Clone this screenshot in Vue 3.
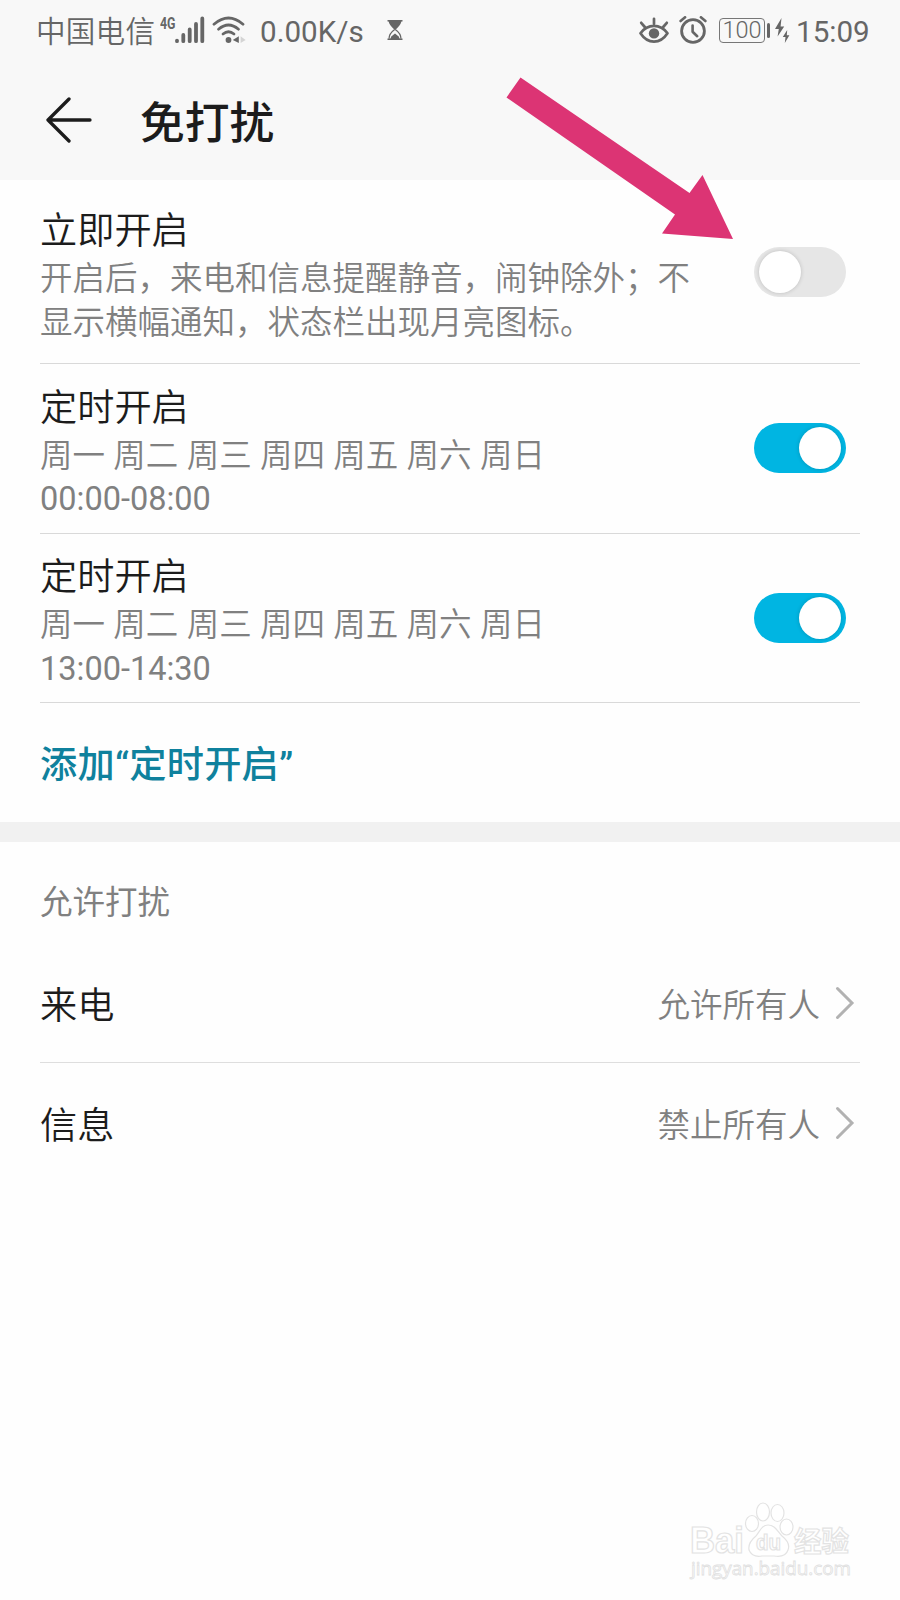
<template>
	<div class="page">
		<header class="header">
			<div class="status-bar">
				<span class="carrier">中国电信</span>
				<svg class="icon-signal" width="45" height="36" viewBox="0 -4 45 36">
					<text x="0" y="12.8" class="network" textLength="15.5" lengthAdjust="spacingAndGlyphs">4G</text>
					<g stroke="#666" stroke-width="3.8" stroke-linecap="round">
						<path d="M17 24.6v.6M23.3 19v6.2M29.7 13.5v11.7M36 8v17.2M42.3 2.4v22.8" />
					</g>
				</svg>
				<svg class="icon-wifi" width="34" height="28" viewBox="0 0 34 28">
					<g fill="none" stroke="#666" stroke-width="2.8" stroke-linecap="round">
						<path d="M2 8.2Q16.5-4.2 31 8.2" />
						<path d="M6.5 13.2Q16.5 4.8 26.5 13.2" />
						<path d="M11 18Q16.5 13.6 22 18" />
					</g>
					<circle cx="16.5" cy="24" r="2.9" fill="#666" />
					<path d="M26.8 20.3v6.8l-6-3.2z" fill="#666" />
					<path d="M28.6 20.3v6.8l5-3.2z" fill="#d4d4d4" />
				</svg>
				<span class="speed">0.00K/s</span>
				<svg class="icon-hourglass" width="16" height="20" viewBox="0 0 16 20">
					<path d="M.5.7h15M.5 19.3h15" stroke="#666" stroke-width="1.4" />
					<path d="M1.5 1h13q-.6 4-6 8.7h-1Q2.1 5 1.5 1z" fill="#666" />
					<path d="M7.7 9.5Q2 13.5 2 18.8M8.3 9.5Q14 13.5 14 18.8" fill="none" stroke="#666" stroke-width="1.2" />
					<path d="M3.3 19l1-2.6L8 13.5l3.7 2.9 1 2.6z" fill="#666" />
				</svg>
				<span class="spacer"></span>
				<svg class="icon-eye" width="30" height="27" viewBox="0 0 30 27">
					<g fill="none" stroke="#666" stroke-width="2.7" stroke-linecap="round">
						<path d="M1.5 16.2Q7 8.900 15 8.900T28.5 16.2Q23 24.6 15 24.6T1.5 16.2z" stroke-linejoin="round" />
						<path d="M15 1.8v5M2.2 5.8l3.6 4.2M27.8 5.8l-3.6 4.2" />
					</g>
					<circle cx="15" cy="16.4" r="5.2" fill="#666" />
				</svg>
				<svg class="icon-alarm" width="28" height="28" viewBox="0 0 28 28">
					<g fill="none" stroke="#666" stroke-linecap="round">
						<circle cx="14" cy="15" r="11.4" stroke-width="2.8" />
						<path d="M13.6 9.5v6.2l4.6 4.5" stroke-width="2.6" stroke-linejoin="round" />
						<path d="M1.6 5l4.5-3.7M26.4 5l-4.5-3.7" stroke-width="2.6" />
					</g>
				</svg>
				<div class="battery">100</div>
				<span class="battery-tip"></span>
				<svg class="icon-bolt" width="15" height="26" viewBox="0 0 15 26">
					<path d="M6.5 1L0 12h3.8L2.6 19.5 9.2 9.5H5.6z" fill="#666" />
					<path d="M12.2 13L7.8 20h2.7l-.7 6 4.6-7.7h-2.6z" fill="#666" />
				</svg>
				<span class="clock">15:09</span>
			</div>
			<div class="title-bar">
				<svg class="back" width="46" height="46" viewBox="0 0 46 46">
					<path d="M23 2L2 23l21 21M2 23h42" fill="none" stroke="#1c1c1c" stroke-width="3.3" stroke-linecap="round" stroke-linejoin="round" />
				</svg>
				<h1>免打扰</h1>
			</div>
		</header>

		<section class="schedules">
			<div v-for="(item, index) in items" :key="index" class="row">
				<div class="row-text">
					<div class="row-title">{{ item.title }}</div>
					<div v-for="line in item.lines" :key="line" class="row-desc">{{ line }}</div>
					<div v-if="item.time" class="row-desc time">{{ item.time }}</div>
				</div>
				<button
					type="button"
					class="switch"
					:class="{ on: item.enabled }"
					@click="item.enabled = !item.enabled"
				>
					<span class="knob"></span>
				</button>
			</div>
			<div class="add">添加“定时开启”</div>
		</section>

		<div class="divider"></div>

		<section class="allow">
			<div class="allow-title">允许打扰</div>
			<div v-for="rule in rules" :key="rule.name" class="rule">
				<span class="rule-name">{{ rule.name }}</span>
				<span class="rule-value">{{ rule.value }}</span>
				<svg class="chevron" width="20" height="34" viewBox="0 0 20 34">
					<path d="M2.5 2.5L17 17 2.5 31.5" fill="none" stroke="#b2b2b2" stroke-width="3" stroke-linecap="round" />
				</svg>
			</div>
		</section>

		<svg class="pointer" width="228" height="163" viewBox="0 0 228 163">
			<path d="M13.5.5L182.500 116 195.500 98 226 162l-71-5.500 13-19L-.5 20.500z" fill="#dc3474" />
		</svg>

		<svg class="watermark" width="170" height="82" viewBox="0 0 170 82">
			<g fill="#fff" stroke="#e3e3e3" stroke-width="1.2">
				<text x="2" y="53" class="wm-bold" font-size="36" textLength="54" lengthAdjust="spacingAndGlyphs">Bai</text>
				<ellipse cx="64" cy="23.5" rx="6.5" ry="8" />
				<ellipse cx="75" cy="12" rx="6.5" ry="9" />
				<ellipse cx="89.5" cy="13" rx="6.5" ry="8.5" />
				<ellipse cx="98.500" cy="27" rx="6.5" ry="8" />
				<path d="M80 25c7 0 9 6 14 11 5 4 8 9 6 14-2 6-8 7-14 6h-12c-6 1-11-1-13-6-1-6 2-10 7-14 4-5 6-11 12-11z" />
				<text x="68" y="50" class="wm-bold" font-size="22" textLength="25" lengthAdjust="spacingAndGlyphs">du</text>
				<text x="106" y="52" class="wm-bold" font-size="28" textLength="55" lengthAdjust="spacingAndGlyphs">经验</text>
			</g>
			<text x="3" y="75" class="wm-url" textLength="160" lengthAdjust="spacingAndGlyphs">jingyan.baidu.com</text>
		</svg>
	</div>
</template>

<script setup>
import { ref } from "vue";

const items = ref([
	{
		title: "立即开启",
		lines: ["开启后，来电和信息提醒静音，闹钟除外；不", "显示横幅通知，状态栏出现月亮图标。"],
		enabled: false,
	},
	{
		title: "定时开启",
		lines: ["周一 周二 周三 周四 周五 周六 周日"],
		time: "00:00-08:00",
		enabled: true,
	},
	{
		title: "定时开启",
		lines: ["周一 周二 周三 周四 周五 周六 周日"],
		time: "13:00-14:30",
		enabled: true,
	},
]);

const rules = ref([
	{ name: "来电", value: "允许所有人" },
	{ name: "信息", value: "禁止所有人" },
]);
</script>

<style>
body {
	margin: 0;
	background-color: #fefefe;
}
</style>

<style scoped>
.page {
	position: relative;
	width: 900px;
	height: 1600px;
	overflow: hidden;
	background-color: #fefefe;
	color: #1c1c1c;
	font-family: Roboto, "Noto Sans CJK SC", sans-serif;
}

.header {
	height: 180px;
	background-color: #f8f8f8;
}

.status-bar {
	display: flex;
	align-items: center;
	height: 60px;
	padding: 0 30px 0 36px;
	color: #666;
	font-size: 29.6px;
	line-height: 56px;
	white-space: nowrap;
}

.carrier {
	width: 124px;
	padding-top: 4px;
	font-weight: 350;
	letter-spacing: 0.2px;
}

.network {
	fill: #666;
	font-size: 17px;
	font-weight: 700;
}

.icon-wifi {
	margin-left: 7px;
}

.speed {
	width: 127px;
	padding-top: 4px;
	margin-left: 14px;
}

.spacer {
	flex: 1;
}

.icon-alarm {
	margin-left: 10px;
}

.battery {
	box-sizing: border-box;
	width: 46px;
	height: 25px;
	margin-left: 12px;
	border: 1.5px solid #777;
	border-radius: 4px;
	font-size: 23.5px;
	font-weight: 300;
	line-height: 23px;
	text-align: center;
}

.battery-tip {
	width: 3.5px;
	height: 15px;
	margin-left: 1.5px;
	border-radius: 2px;
	background-color: #666;
}

.icon-bolt {
	margin-left: 5px;
}

.clock {
	width: 74px;
	padding-top: 4px;
	margin-left: 6px;
}

.title-bar {
	display: flex;
	align-items: center;
	height: 120px;
	padding-left: 46px;
}

h1 {
	padding-top: 8px;
	margin: 0 0 0 48px;
	font-size: 44.8px;
	font-weight: 500;
	line-height: 60px;
}

.schedules {
	height: 642px;
	padding: 0 40px;
}

.row {
	display: flex;
	box-sizing: border-box;
	align-items: center;
	justify-content: space-between;
	height: 169.5px;
	padding-right: 14px;
	border-bottom: 1px solid #d9d9d9;
}

.row:first-child {
	height: 184px;
}

.row-text {
	padding-top: 6px;
}

.row-title {
	font-size: 37.2px;
	font-weight: 350;
	line-height: 54px;
}

.row-desc {
	color: #808080;
	font-size: 32.5px;
	font-weight: 350;
	line-height: 43.5px;
	word-spacing: 0.4px;
	white-space: nowrap;
}

.time {
	font-weight: 400;
}

.switch {
	width: 92px;
	height: 50px;
	padding: 4px 5px;
	border: none;
	border-radius: 25px;
	background-color: #e6e6e6;
	cursor: pointer;
}

.knob {
	display: block;
	width: 42px;
	height: 42px;
	border-radius: 50%;
	background-color: #fff;
	box-shadow: 0 0 4px rgba(0, 0, 0, 0.18);
}

.switch.on {
	background-color: #00b5e2;
}

.switch.on .knob {
	margin-left: 40px;
}

.add {
	padding-top: 3px;
	color: #0f819d;
	font-size: 37.2px;
	font-weight: 500;
	letter-spacing: 0.25px;
	line-height: 119px;
}

.divider {
	height: 20px;
	background-color: #f1f1f1;
}

.allow {
	padding: 0 40px;
}

.allow-title {
	height: 101px;
	color: #808080;
	font-size: 32.5px;
	line-height: 123px;
}

.rule {
	display: flex;
	align-items: center;
	height: 119px;
	padding-right: 5px;
	border-bottom: 1px solid #dedede;
}

.rule:last-child {
	border-bottom: none;
}

.rule-name {
	flex: 1;
	font-size: 37.2px;
	font-weight: 350;
}

.rule-value {
	color: #808080;
	font-size: 32.5px;
	font-weight: 350;
}

.chevron {
	margin-left: 15px;
}

.pointer {
	position: absolute;
	top: 77px;
	left: 507px;
	overflow: visible;
}

.watermark {
	position: absolute;
	top: 1500px;
	left: 688px;
}

.wm-bold {
	font-family: "Liberation Sans", "Noto Sans CJK SC", sans-serif;
	font-weight: 700;
}

.wm-url {
	fill: #fff;
	stroke: #e0e0e0;
	stroke-width: 0.8px;
	font-family: "Open Sans", sans-serif;
	font-size: 19px;
}
</style>
